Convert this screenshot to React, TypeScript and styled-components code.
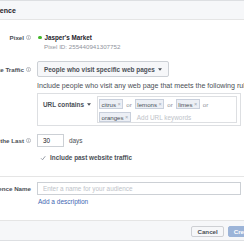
import React from 'react';
import styled, { createGlobalStyle } from 'styled-components';

const Global = createGlobalStyle`
  html, body { margin: 0; padding: 0; background: #fff; overflow: hidden; }
  body { width: 244px; height: 244px; font-family: "Liberation Sans", Arial, sans-serif; }
`;

const Dialog = styled.div`
  width: 350px;
  margin-left: -85px;
  border-top: 1px solid #dddfe2;
  border-bottom: 1px solid #dddfe2;
  font-size: 6.2px;
  color: #1d2129;
`;

const Header = styled.div`
  height: 18px;
  padding: 0 12px;
  display: flex;
  align-items: center;
  background: #f6f7f9;
  border-bottom: 1px solid #e5e5e5;
  font-size: 7px;
  font-weight: bold;
  color: #1d2129;
`;

const Section = styled.div<{ $top: number; $bottom: number }>`
  padding: ${(p) => p.$top}px 24px ${(p) => p.$bottom}px 0;
  border-bottom: 1px solid #e5e5e5;
`;

const Row = styled.div<{ $mt?: number; $align?: string }>`
  display: grid;
  grid-template-columns: 116px 1fr;
  column-gap: 6px;
  align-items: ${(p) => p.$align || 'center'};
  margin-top: ${(p) => p.$mt || 0}px;
`;

const Label = styled.div<{ $h?: number }>`
  display: flex;
  justify-content: flex-end;
  align-items: center;
  gap: 2px;
  height: ${(p) => (p.$h ? `${p.$h}px` : 'auto')};
  line-height: 9px;
  font-weight: bold;
  color: #4b4f56;
  white-space: nowrap;
`;

const Content = styled.div`
  display: flex;
  flex-direction: column;
  min-width: 0;
`;

const PixelName = styled.div`
  display: flex;
  align-items: center;
  gap: 3px;
  line-height: 9px;
  font-weight: bold;
  font-size: 6.3px;
`;

const Dot = styled.span`
  width: 3.5px;
  height: 3.5px;
  border-radius: 50%;
  background: #42b72a;
  margin-left: 1px;
`;

const PixelId = styled.div`
  line-height: 9px;
  padding-left: 7px;
  color: #90949c;
`;

const SelectButton = styled.div`
  align-self: flex-start;
  box-sizing: border-box;
  height: 16px;
  display: flex;
  align-items: center;
  gap: 3px;
  padding: 0 6px;
  background: #f6f7f9;
  border: 1px solid #ccd0d5;
  border-radius: 2px;
  font-size: 6.45px;
  font-weight: bold;
  color: #4b4f56;
  white-space: nowrap;
`;

const HelpText = styled.div`
  margin-top: 5px;
  line-height: 9px;
  font-size: 7.1px;
  color: #4b4f56;
  white-space: nowrap;
`;

const RuleBox = styled.div`
  margin-top: 2px;
  display: flex;
  border: 1px solid #dddfe2;
  padding: 2px 3px;
`;

const RuleSelect = styled.div`
  width: 52px;
  margin: 3px 2px 0 0;
  padding-left: 2px;
  display: flex;
  align-items: center;
  gap: 3px;
  height: 10px;
  font-size: 6.4px;
  font-weight: bold;
  color: #4b4f56;
  white-space: nowrap;
`;

const TagInput = styled.div`
  flex: 1;
  display: flex;
  flex-wrap: wrap;
  align-items: center;
  align-content: flex-start;
  gap: 3px 3px;
  border: 1px solid #dddfe2;
  padding: 2px 2px 0 1px;
`;

const Tag = styled.span`
  box-sizing: border-box;
  height: 10px;
  display: inline-flex;
  align-items: center;
  gap: 1.5px;
  padding: 0 1.5px;
  background: #eceff5;
  border: 1px solid #c9d0dc;
  font-size: 6.1px;
  color: #4b4f56;
`;

const TagX = styled.span`
  color: #a3a8b1;
  font-size: 5.6px;
`;

const Or = styled.span`
  color: #90949c;
  font-size: 6.2px;
`;

const Placeholder = styled.span`
  color: #bec3c9;
  font-size: 6.4px;
  margin-left: 3px;
`;

const Inline = styled.div`
  display: flex;
  align-items: center;
  gap: 5px;
`;

const TextInput = styled.div<{ $width?: string; $color?: string }>`
  box-sizing: border-box;
  height: 13px;
  width: ${(p) => p.$width || '100%'};
  display: flex;
  align-items: center;
  padding: 0 5px;
  border: 1px solid #ccd0d5;
  font-size: 6.4px;
  color: ${(p) => p.$color || '#1d2129'};
  white-space: nowrap;
  overflow: hidden;
`;

const Muted = styled.span`
  color: #4b4f56;
  font-size: 6.4px;
`;

const CheckRow = styled.div`
  display: flex;
  align-items: center;
  gap: 4px;
  margin-left: 3px;
  line-height: 10px;
  font-weight: bold;
  font-size: 6.4px;
  color: #4b4f56;
  white-space: nowrap;
`;

const Link = styled.div`
  margin-top: 2px;
  line-height: 9px;
  font-size: 6.5px;
  color: #4267b2;
  padding-left: 1px;
`;

const Footer = styled.div`
  display: flex;
  justify-content: flex-end;
  gap: 4px;
  padding: 5px 6px 3px;
  background: #f6f7f9;
`;

const Button = styled.div<{ $primary?: boolean }>`
  box-sizing: border-box;
  height: 11px;
  display: flex;
  align-items: center;
  padding: 0 5px;
  border: 1px solid ${(p) => (p.$primary ? '#9cb4d8' : '#ced0d4')};
  border-radius: 2px;
  background: ${(p) => (p.$primary ? '#9cb4d8' : '#f6f7f9')};
  color: ${(p) => (p.$primary ? '#fff' : '#4b4f56')};
  font-weight: bold;
`;

const Info = () => (
  <svg width="5" height="5" viewBox="0 0 10 10">
    <circle cx="5" cy="5" r="4.2" fill="none" stroke="#90949c" strokeWidth="1.2" />
    <rect x="4.4" y="4.2" width="1.2" height="3.4" fill="#90949c" />
    <rect x="4.4" y="2.4" width="1.2" height="1.2" fill="#90949c" />
  </svg>
);

const Caret = () => (
  <svg width="4" height="3" viewBox="0 0 8 5">
    <path d="M0 0 L8 0 L4 5 Z" fill="#4b4f56" />
  </svg>
);

const Check = () => (
  <svg width="6" height="6" viewBox="0 0 12 12">
    <path d="M2 6.5 L5 9.5 L10.5 2.5" fill="none" stroke="#7f8590" strokeWidth="1.6" />
  </svg>
);

const tags = ['citrus', 'lemons', 'limes', 'oranges'];

export default function App() {
  return (
    <>
      <Global />
      <Dialog>
        <Header>Create a Custom Audience</Header>
        <Section $top={13} $bottom={13}>
          <Row $align="start">
            <Label>
              Pixel <Info />
            </Label>
            <Content>
              <PixelName>
                <Dot />
                Jasper's Market
              </PixelName>
              <PixelId>Pixel ID: 255440941307752</PixelId>
            </Content>
          </Row>
          <Row $mt={10} $align="start">
            <Label $h={16}>
              Website Traffic <Info />
            </Label>
            <Content>
              <SelectButton>
                People who visit specific web pages <Caret />
              </SelectButton>
              <HelpText>Include people who visit any web page that meets the following rules:</HelpText>
              <RuleBox>
                <RuleSelect>
                  URL contains <Caret />
                </RuleSelect>
                <TagInput>
                  {tags.map((t, i) => (
                    <React.Fragment key={t}>
                      <Tag>
                        {t}
                        <TagX>×</TagX>
                      </Tag>
                      {i < tags.length - 1 && <Or>or</Or>}
                    </React.Fragment>
                  ))}
                  <Placeholder>Add URL keywords</Placeholder>
                </TagInput>
              </RuleBox>
            </Content>
          </Row>
          <Row $mt={8}>
            <Label>
              In the Last <Info />
            </Label>
            <Inline>
              <TextInput $width="27px">30</TextInput>
              <Muted>days</Muted>
            </Inline>
          </Row>
          <Row $mt={6}>
            <div />
            <CheckRow>
              <Check />
              Include past website traffic
            </CheckRow>
          </Row>
        </Section>
        <Section $top={5} $bottom={14}>
          <Row>
            <Label>Audience Name</Label>
            <TextInput $color="#bec3c9">Enter a name for your audience</TextInput>
          </Row>
          <Row>
            <div />
            <Link>Add a description</Link>
          </Row>
        </Section>
        <Footer>
          <Button>Cancel</Button>
          <Button $primary>Create</Button>
        </Footer>
      </Dialog>
    </>
  );
}
